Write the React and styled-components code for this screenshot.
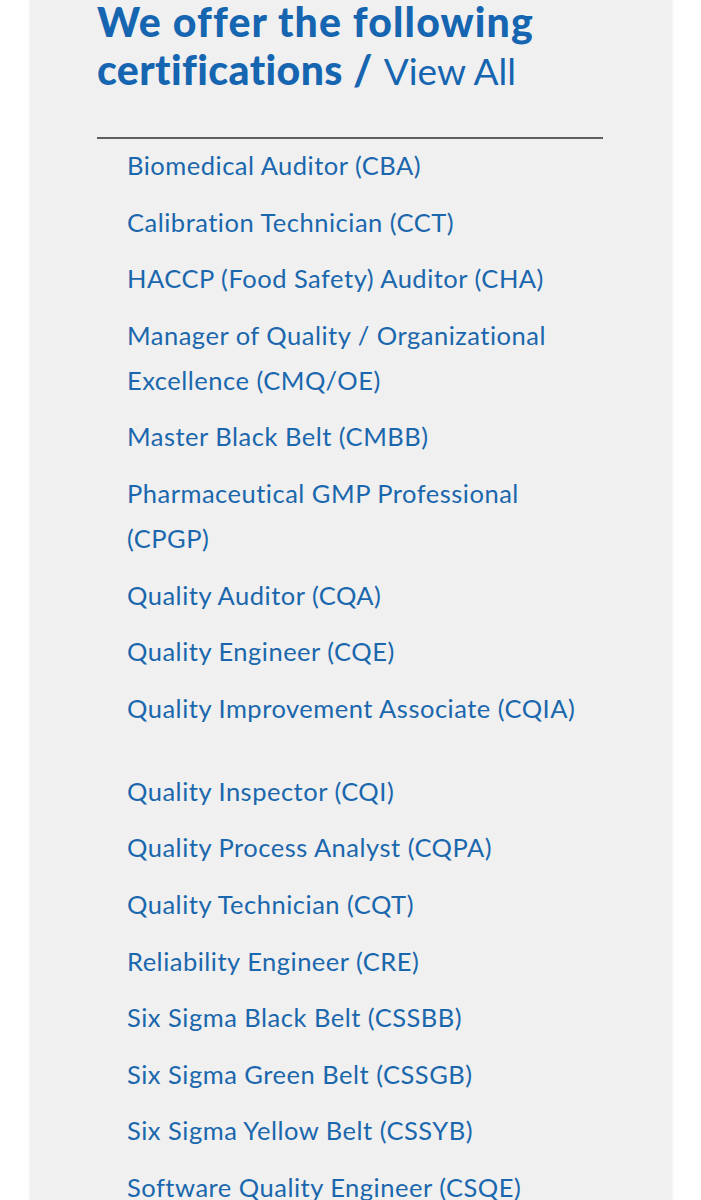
import React from "react";
import styled, { createGlobalStyle } from "styled-components";

const Global = createGlobalStyle`
  html, body { margin: 0; padding: 0; background: #ffffff; }
  body { font-family: "Lato", "Liberation Sans", sans-serif; }
`;

const Page = styled.div`
  padding: 0 29px 0 30px;
  height: 1200px;
  overflow: hidden;
`;

const Panel = styled.section`
  background: #f0f0f0;
  box-shadow: 0 0 4px rgba(0, 0, 0, 0.08);
  padding: 0 68px 40px 67px;
  min-height: 1300px;
`;

const Title = styled.h2`
  margin: 0;
  padding-top: 0;
  margin-top: -2px;
  font-family: "Lato", sans-serif;
  font-weight: 900;
  font-size: 41px;
  letter-spacing: 1.1px;
  line-height: 48px;
  color: #1565b0;
`;

const Accent = styled.span`
  letter-spacing: 0.4px;
`;

const ViewAll = styled.a`
  font-weight: 400;
  font-size: 37px;
  letter-spacing: 0;
  color: #1565b0;
  text-decoration: none;
`;

const Rule = styled.hr`
  margin: 42px 0 0;
  border: 0;
  border-top: 2px solid #5f5f5f;
  width: 506px;
`;

const List = styled.ul`
  list-style: none;
  margin: 0;
  padding: 4px 0 0 30px;
  width: 450px;
`;

const Item = styled.li`
  margin-top: ${(p) => (p.$extra ? "38px" : "11.6px")};
  &:first-child { margin-top: 0; }
`;

const ItemLink = styled.a`
  font-family: "Lato", sans-serif;
  font-size: 25.5px;
  letter-spacing: 0.5px;
  line-height: 45px;
  color: #1a67ad;
  text-decoration: none;
`;

const certs = [
  ["Biomedical Auditor (CBA)"],
  ["Calibration Technician (CCT)"],
  ["HACCP (Food Safety) Auditor (CHA)"],
  ["Manager of Quality / Organizational Excellence (CMQ/OE)"],
  ["Master Black Belt (CMBB)"],
  ["Pharmaceutical GMP Professional (CPGP)"],
  ["Quality Auditor (CQA)"],
  ["Quality Engineer (CQE)"],
  ["Quality Improvement Associate (CQIA)"],
  ["Quality Inspector (CQI)", true],
  ["Quality Process Analyst (CQPA)"],
  ["Quality Technician (CQT)"],
  ["Reliability Engineer (CRE)"],
  ["Six Sigma Black Belt (CSSBB)"],
  ["Six Sigma Green Belt (CSSGB)"],
  ["Six Sigma Yellow Belt (CSSYB)"],
  ["Software Quality Engineer (CSQE)"],
];

export default function App() {
  return (
    <>
      <Global />
      <Page>
        <Panel>
          <Title>
            We offer the following
            <br />
            <Accent>certifications /</Accent> <ViewAll href="#">View All</ViewAll>
          </Title>
          <Rule />
          <List>
            {certs.map(([name, extra]) => (
              <Item key={name} $extra={extra}>
                <ItemLink href="#">{name}</ItemLink>
              </Item>
            ))}
          </List>
        </Panel>
      </Page>
    </>
  );
}
